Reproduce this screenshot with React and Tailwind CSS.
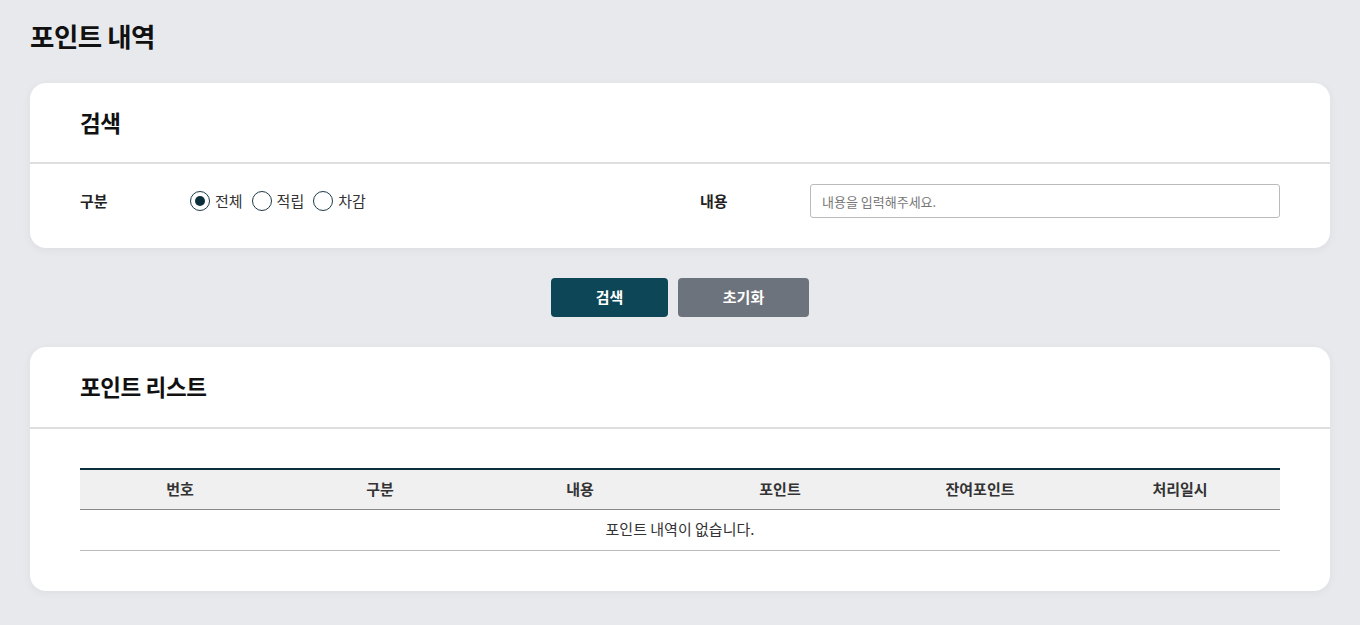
import React from "react";

const font = { fontFamily: '"Noto Sans CJK KR", "Noto Sans", sans-serif' };

function Radio({ checked, label }) {
  return (
    <label className="flex items-center gap-[5px] text-[15px] text-[#333]">
      <span className="w-[20px] h-[20px] rounded-full border-[1.5px] border-[#1d3a47] flex items-center justify-center bg-white">
        {checked && <span className="w-[10px] h-[10px] rounded-full bg-[#0b2f3b]" />}
      </span>
      <span className="mr-[5px]">{label}</span>
    </label>
  );
}

export default function App() {
  const cols = ["번호", "구분", "내용", "포인트", "잔여포인트", "처리일시"];
  return (
    <div className="min-h-[625px] bg-[#e8e9ed] px-[30px] pt-[17px] pb-[34px] text-[#111]" style={font}>
      <h1 className="text-[26.5px] font-bold leading-[38px] tracking-[-0.5px]">포인트 내역</h1>

      <div className="mt-[28px] bg-white rounded-[16px] shadow-[0_2px_10px_rgba(0,0,0,0.05)]">
        <div className="h-[81px] px-[50px] flex items-center border-b-2 border-[#dedede]">
          <h2 className="text-[22.5px] font-bold tracking-[-0.4px]">검색</h2>
        </div>
        <div className="pt-[20px] pb-[30px] flex items-center px-[50px]">
          <div className="w-[110px] text-[15px] font-semibold text-[#222]">구분</div>
          <div className="flex items-center gap-[4px] w-[510px]">
            <Radio checked label="전체" />
            <Radio label="적립" />
            <Radio label="차감" />
          </div>
          <div className="w-[110px] text-[15px] font-semibold text-[#222]">내용</div>
          <input
            className="w-[470px] h-[34px] border border-[#bbb] rounded-[3px] px-[11px] text-[13px] outline-none placeholder:text-[#777]"
            placeholder="내용을 입력해주세요."
            style={font}
          />
        </div>
      </div>

      <div className="flex justify-center gap-[10px] mt-[30px]">
        <button className="w-[117px] h-[39px] rounded-[4px] bg-[#0d4656] text-white text-[15px] font-bold" style={font}>검색</button>
        <button className="w-[131px] h-[39px] rounded-[4px] bg-[#6c737c] text-white text-[15px] font-bold" style={font}>초기화</button>
      </div>

      <div className="mt-[30px] bg-white rounded-[16px] shadow-[0_2px_10px_rgba(0,0,0,0.05)] pb-[40px]">
        <div className="h-[82px] px-[50px] flex items-center border-b-2 border-[#dedede]">
          <h2 className="text-[22.5px] font-bold tracking-[-0.4px]">포인트 리스트</h2>
        </div>
        <div className="px-[50px] pt-[39px]">
          <table className="w-full table-fixed border-collapse">
            <thead>
              <tr className="bg-[#f0f0f0] border-t-2 border-t-[#0b2f3b] border-b border-b-[#888]">
                {cols.map((c) => (
                  <th key={c} className="h-[40px] text-[15px] font-semibold text-[#333]">{c}</th>
                ))}
              </tr>
            </thead>
            <tbody>
              <tr className="border-b border-b-[#bbb]">
                <td colSpan={6} className="h-[41px] text-center text-[15px] text-[#333]">포인트 내역이 없습니다.</td>
              </tr>
            </tbody>
          </table>
        </div>
      </div>
    </div>
  );
}
